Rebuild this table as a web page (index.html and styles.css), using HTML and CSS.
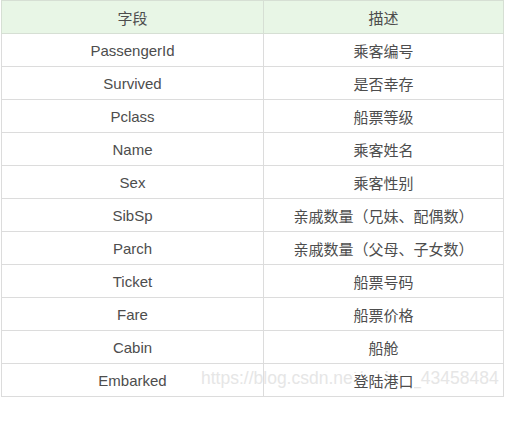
FILE: index.html
```html
<!DOCTYPE html>
<html lang="zh">
<head>
<meta charset="utf-8">
<link rel="stylesheet" href="styles.css">
</head>
<body>
<div class="wrap">
<table class="grid">
  <thead>
    <tr><th>字段</th><th>描述</th></tr>
  </thead>
  <tbody>
    <tr><td>PassengerId</td><td>乘客编号</td></tr>
    <tr><td>Survived</td><td>是否幸存</td></tr>
    <tr><td>Pclass</td><td>船票等级</td></tr>
    <tr><td>Name</td><td>乘客姓名</td></tr>
    <tr><td>Sex</td><td>乘客性别</td></tr>
    <tr><td>SibSp</td><td>亲戚数量（兄妹、配偶数）</td></tr>
    <tr><td>Parch</td><td>亲戚数量（父母、子女数）</td></tr>
    <tr><td>Ticket</td><td>船票号码</td></tr>
    <tr><td>Fare</td><td>船票价格</td></tr>
    <tr><td>Cabin</td><td>船舱</td></tr>
    <tr><td>Embarked</td><td><span class="cover">登陆港口</span></td></tr>
  </tbody>
</table>
<div class="watermark">https://blog.csdn.net/weixin_43458484</div>
</div>
</body>
</html>
```
FILE: styles.css
```css
html, body {
  margin: 0;
  padding: 0;
  background: #ffffff;
}
.wrap {
  position: relative;
  padding: 0 0 0 1px;
  width: 504px;
}
.grid {
  border-collapse: collapse;
  width: 503px;
  table-layout: fixed;
  font-family: "Liberation Sans", "Noto Sans CJK SC", sans-serif;
  font-size: 15px;
  color: #4d4d4d;
}
.grid th, .grid td {
  height: 32px;
  padding: 0;
  text-align: center;
  vertical-align: middle;
  border: 1px solid #dcdcdc;
  font-weight: normal;
}
.grid th:first-child, .grid td:first-child {
  width: 261px;
}
.grid thead th {
  background: #e8f6e6;
  border-color: #d6dfd4;
}
.grid tbody tr:nth-child(1) td {
  border-top-color: #d6dfd4;
}
.cover {
  position: relative;
  z-index: 2;
  background: #ffffff;
}
.watermark {
  position: absolute;
  left: 201px;
  top: 368px;
  z-index: 1;
  font-family: "Liberation Sans", sans-serif;
  font-size: 17.5px;
  color: #e6e6e6;
  white-space: nowrap;
  pointer-events: none;
}
```
